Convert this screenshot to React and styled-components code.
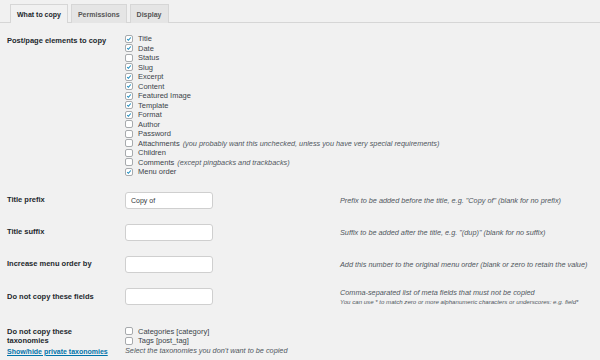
import React from "react";
import styled, { createGlobalStyle } from "styled-components";

const Global = createGlobalStyle`
  html, body {
    margin: 0;
    padding: 0;
    background: #f1f1f1;
  }
  body {
    font-family: "Liberation Sans", Arial, sans-serif;
    color: #23282d;
    font-size: 8px;
  }
`;

const Page = styled.div`
  width: 600px;
  height: 360px;
  overflow: hidden;
  padding-top: 4px;
  box-sizing: border-box;
`;

const TabBar = styled.div`
  display: flex;
  gap: 3px;
  padding-left: 10px;
  border-bottom: 1px solid #d6d6d6;
  height: 18px;
`;

const Tab = styled.div`
  box-sizing: border-box;
  height: 19px;
  padding: 0 6px;
  display: flex;
  align-items: center;
  font-weight: bold;
  font-size: 7px;
  border: 1px solid #d6d6d6;
  border-bottom: none;
  background: ${(p) => (p.active ? "#f1f1f1" : "#e5e5e5")};
  color: ${(p) => (p.active ? "#23282d" : "#555")};
`;

const Form = styled.div`
  padding: 11px 0 0 7px;
`;

const Row = styled.div`
  display: grid;
  grid-template-columns: 118px 215px 1fr;
  align-items: ${(p) => (p.top ? "start" : "center")};
  margin-bottom: ${(p) => p.gap || 0}px;
`;

const Label = styled.div`
  font-weight: bold;
  font-size: 7.5px;
  line-height: 9.5px;
  padding-top: ${(p) => p.pt || 0}px;
`;

const CheckList = styled.div`
  display: flex;
  flex-direction: column;
`;

const CheckRow = styled.label`
  display: flex;
  align-items: center;
  height: 9.5px;
  font-size: 7.5px;
  color: #3c434a;
  white-space: nowrap;
`;

const Box = styled.span`
  box-sizing: border-box;
  flex: none;
  width: 8px;
  height: 8px;
  border: 1px solid #a7aaad;
  border-radius: 2px;
  background: #fff;
  margin-right: 5px;
  display: flex;
  align-items: center;
  justify-content: center;
`;

const Note = styled.i`
  font-size: 7.3px;
  color: #50575e;
  margin-left: 3px;
`;

const Input = styled.div`
  box-sizing: border-box;
  width: 88px;
  height: 17px;
  background: #fff;
  border: 1px solid #cfcfcf;
  border-radius: 3px;
  padding-left: 5px;
  display: flex;
  align-items: center;
  font-size: 7px;
  color: #32373c;
`;

const Desc = styled.div`
  font-style: italic;
  font-size: 7.3px;
  color: #50575e;
  line-height: 9px;
  white-space: nowrap;
`;

const Small = styled.div`
  font-size: 6.1px;
  line-height: 9px;
`;

const Link = styled.a`
  display: block;
  color: #0073aa;
  text-decoration: underline;
  font-size: 7px;
  font-weight: bold;
  line-height: 11px;
`;

const Check = ({ on, children, note }) => (
  <CheckRow>
    <Box>
      {on && (
        <svg width="8" height="8" viewBox="0 0 8 8">
          <path
            d="M1.6 4.1 L3.2 5.7 L6.4 2"
            fill="none"
            stroke="#1e8cbe"
            strokeWidth="1.4"
          />
        </svg>
      )}
    </Box>
    {children}
    {note && <Note>{note}</Note>}
  </CheckRow>
);

const elements = [
  ["Title", true],
  ["Date", true],
  ["Status", false],
  ["Slug", true],
  ["Excerpt", true],
  ["Content", true],
  ["Featured Image", true],
  ["Template", true],
  ["Format", true],
  ["Author", false],
  ["Password", false],
  [
    "Attachments",
    false,
    "(you probably want this unchecked, unless you have very special requirements)",
  ],
  ["Children", false],
  ["Comments", false, "(except pingbacks and trackbacks)"],
  ["Menu order", true],
];

const App = () => (
  <Page>
    <Global />
    <TabBar>
      <Tab active>What to copy</Tab>
      <Tab>Permissions</Tab>
      <Tab>Display</Tab>
    </TabBar>
    <Form>
      <Row top gap={15}>
        <Label pt={2}>Post/page elements to copy</Label>
        <CheckList>
          {elements.map(([name, on, note]) => (
            <Check key={name} on={on} note={note}>
              {name}
            </Check>
          ))}
        </CheckList>
      </Row>
      <Row gap={15}>
        <Label>Title prefix</Label>
        <Input>Copy of</Input>
        <Desc>
          Prefix to be added before the title, e.g. "Copy of" (blank for no
          prefix)
        </Desc>
      </Row>
      <Row gap={15}>
        <Label>Title suffix</Label>
        <Input />
        <Desc>
          Suffix to be added after the title, e.g. "(dup)" (blank for no
          suffix)
        </Desc>
      </Row>
      <Row gap={15}>
        <Label>Increase menu order by</Label>
        <Input />
        <Desc>
          Add this number to the original menu order (blank or zero to retain
          the value)
        </Desc>
      </Row>
      <Row gap={21}>
        <Label>Do not copy these fields</Label>
        <Input />
        <Desc>
          Comma-separated list of meta fields that must not be copied
          <Small>
            You can use * to match zero or more alphanumeric characters or
            underscores: e.g. field*
          </Small>
        </Desc>
      </Row>
      <Row top>
        <div>
          <Label>
            Do not copy these
            <br />
            taxonomies
          </Label>
          <Link>Show/hide private taxonomies</Link>
        </div>
        <CheckList>
          <Check>Categories [category]</Check>
          <Check>Tags [post_tag]</Check>
          <Desc>Select the taxonomies you don't want to be copied</Desc>
        </CheckList>
      </Row>
    </Form>
  </Page>
);

export default App;
